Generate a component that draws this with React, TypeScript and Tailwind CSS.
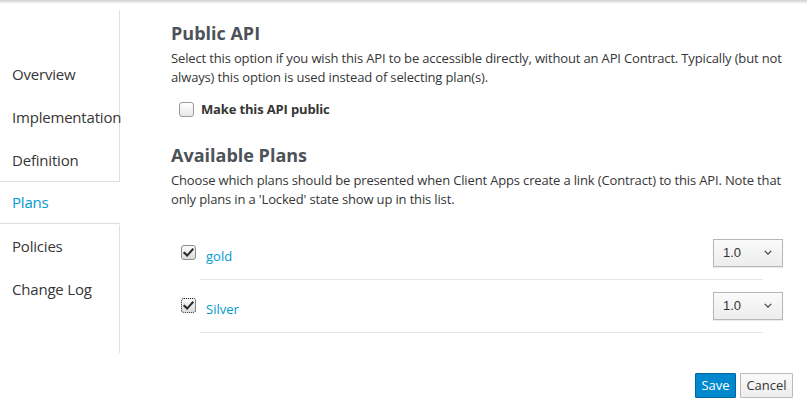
import React from 'react'

const navItems = ['Overview', 'Implementation', 'Definition', 'Plans', 'Policies', 'Change Log']

function CheckMark() {
  return (
    <svg viewBox="0 0 16 16" className="h-[11px] w-[11px]" aria-hidden="true">
      <path d="M2 8.5 L6 12.5 L14 3.5" fill="none" stroke="#2b2b2b" strokeWidth="3" strokeLinecap="square" />
    </svg>
  )
}

function PlanBox({ focused = false }: { focused?: boolean }) {
  return (
    <span
      className={`flex h-[15px] w-[15px] shrink-0 items-center justify-center rounded-[3px] border bg-gradient-to-b from-[#fbfbfb] to-[#dcdcdc] ${focused ? 'border-dotted border-[#222]' : 'border-[#8d8d8d]'}`}
    >
      <CheckMark />
    </span>
  )
}

function VersionSelect() {
  return (
    <div className="mr-[-20px] ml-auto flex h-[28px] w-[70px] items-center justify-between border border-[#b7b7b7] bg-gradient-to-b from-[#fafafa] to-[#ededed] pr-[10px] pl-[9px] shadow-[0_1px_1px_rgba(0,0,0,0.08)]">
      <span className="font-['Liberation_Sans',sans-serif] text-[13px] text-[#333]">1.0</span>
      <svg viewBox="0 0 10 6" className="h-[5px] w-[8px]" aria-hidden="true">
        <path d="M1 1 L5 5 L9 1" fill="none" stroke="#444" strokeWidth="1.6" />
      </svg>
    </div>
  )
}

function PlanRow({ name, focused }: { name: string; focused?: boolean }) {
  return (
    <div className="ml-[29px] flex h-[53px] w-[563px] items-center border-b border-[#e6e6e6]">
      <div className="ml-[-19px] flex items-center">
        <PlanBox focused={focused} />
        <span className="mt-[9px] ml-[10px] text-[13px] text-[#0099d3]">{name}</span>
      </div>
      <VersionSelect />
    </div>
  )
}

export default function App() {
  return (
    <div className="h-[409px] w-[807px] overflow-hidden bg-white font-['Open_Sans',sans-serif] text-[#363636]">
      <div className="h-[4px] bg-gradient-to-b from-[#d0d0d0] to-white" />
      <div className="flex pt-[6px]">
        <ul className="w-[120px] shrink-0">
          <li className="h-[43px] border-r border-[#e0e0e0]" />
          {navItems.map((item) => {
            const active = item === 'Plans'
            return (
              <li
                key={item}
                className={`flex h-[43px] items-center pl-[12px] text-[15px] tracking-[-0.2px] whitespace-nowrap ${active ? 'mt-[-1px] mb-px border-y border-[#dedede] text-[#0099d3]' : 'border-r border-[#e0e0e0]'}`}
              >
                {item}
              </li>
            )
          })}
          <li className="h-[42px] border-r border-[#e0e0e0]" />
        </ul>

        <div className="flex-1 pt-[11px] pr-[4px] pl-[51px]">
          <h3 className="text-[18px] leading-[24px] font-bold text-[#4d5258]">Public API</h3>
          <p className="mt-[4px] text-[13px] leading-[19px] tracking-[-0.15px]">
            Select this option if you wish this API to be accessible directly, without an API Contract. Typically (but
            not always) this option is used instead of selecting plan(s).
          </p>
          <label className="mt-[13px] flex items-center gap-[7px] pl-[8px]">
            <span className="h-[15px] w-[15px] rounded-[3px] border border-[#9a9a9a] bg-gradient-to-b from-white to-[#e8e8e8]" />
            <span className="text-[13px] font-bold tracking-[-0.15px]">Make this API public</span>
          </label>

          <h3 className="mt-[23px] text-[18px] leading-[24px] font-bold text-[#4d5258]">Available Plans</h3>
          <p className="mt-[4px] text-[13px] leading-[19px] tracking-[-0.15px]">
            Choose which plans should be presented when Client Apps create a link (Contract) to this API. Note that only
            plans in a 'Locked' state show up in this list.
          </p>
          <div className="mt-[18px]">
            <PlanRow name="gold" />
            <PlanRow name="Silver" focused />
          </div>
        </div>
      </div>

      <div className="mt-[20px] flex justify-end gap-[4px] pr-[14px]">
        <button className="h-[25px] w-[41px] rounded-[1px] border border-[#00659c] bg-[#0088ce] text-[13px] text-white">
          Save
        </button>
        <button className="h-[25px] w-[53px] rounded-[1px] border border-[#bbbbbb] bg-gradient-to-b from-[#fafafa] to-[#ededed] text-[13px] text-[#363636]">
          Cancel
        </button>
      </div>
    </div>
  )
}
